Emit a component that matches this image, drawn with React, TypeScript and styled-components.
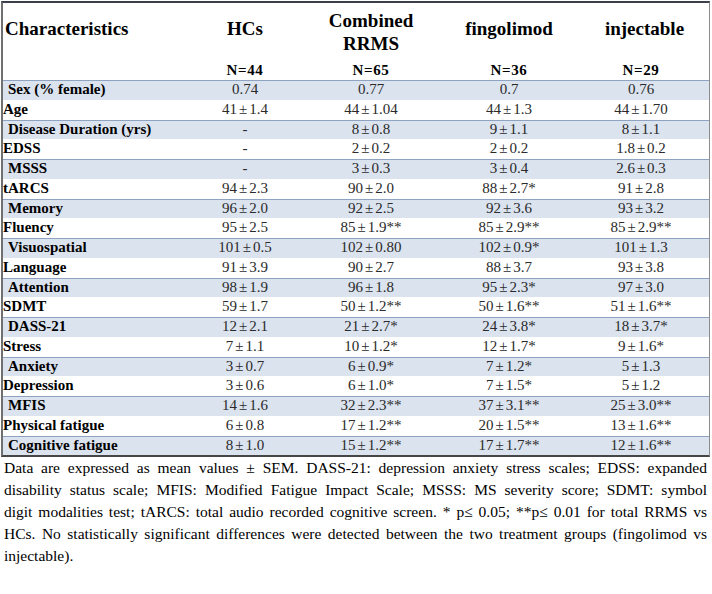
import styled, { createGlobalStyle, css } from "styled-components";

const GlobalStyle = createGlobalStyle`
  html, body {
    margin: 0;
    padding: 0;
    background: #fff;
  }
`;

const serif = css`
  font-family: "Liberation Serif", serif;
`;

const COLS = "181px 122px 130px 146px 1fr";

export const StyledPage = styled.div`
  ${serif};
  width: 712px;
  padding: 1px 0 0 1px;
  box-sizing: border-box;
  color: #000;
`;

export const StyledTable = styled.div`
  ${serif};
  width: 709px;
  box-sizing: border-box;
  border-top: 2px solid #39404c;
  border-left: 2px solid #707070;
  border-right: 1px solid #8c8c8c;
  border-bottom: 2px solid #464646;
`;

export const StyledHeadRow = styled.div`
  display: grid;
  grid-template-columns: ${COLS};
  height: 57px;
  align-items: start;
`;

export const StyledNRow = styled.div`
  display: grid;
  grid-template-columns: ${COLS};
  height: 20px;
  align-items: center;
`;

export const StyledHeadCell = styled.div<{ $left?: boolean; $small?: boolean; $two?: boolean }>`
  ${serif};
  font-size: ${(p) => (p.$small ? "15px" : "19px")};
  line-height: ${(p) => (p.$small ? "18px" : "23px")};
  font-weight: bold;
  color: #000;
  letter-spacing: ${(p) => (p.$small ? "0.6px" : "0")};
  text-align: ${(p) => (p.$left ? "left" : "center")};
  padding-top: ${(p) => (p.$small ? "0" : p.$two ? "6px" : "14px")};
  padding-left: ${(p) => (p.$left ? "2px" : "0")};
  &:last-child {
    padding-right: ${(p) => (p.$small ? "9px" : "2px")};
  }
`;

export const StyledRow = styled.div<{ $shaded: boolean }>`
  display: grid;
  grid-template-columns: ${COLS};
  height: 19.75px;
  box-sizing: border-box;
  align-items: center;
  padding-bottom: 4px;
  background: ${(p) => (p.$shaded ? "#dbe3ef" : "#fff")};
  border-top: 1px solid ${(p) => (p.$shaded ? "#8ea2c1" : "transparent")};
`;

export const StyledLabel = styled.div<{ $indent: boolean }>`
  ${serif};
  font-size: 15px;
  line-height: 17px;
  font-weight: bold;
  color: #000;
  padding-left: ${(p) => (p.$indent ? "5px" : "0")};
  white-space: nowrap;
`;

export const StyledValue = styled.div`
  ${serif};
  font-size: 15px;
  line-height: 17px;
  font-weight: normal;
  text-align: center;
  color: #2a2a2a;
  white-space: nowrap;
  &:last-child {
    padding-right: 9px;
  }
`;

export const StyledPm = styled.span`
  margin: 0 2px;
`;

export const StyledNote = styled.div`
  width: 706px;
  padding-left: 3px;
  box-sizing: border-box;
`;

export const StyledNoteLine = styled.div<{ $last?: boolean }>`
  ${serif};
  font-size: 15.5px;
  line-height: 22px;
  font-weight: normal;
  color: #000;
  white-space: nowrap;
  text-align: justify;
  text-align-last: ${(p) => (p.$last ? "left" : "justify")};
`;

const rows: [string, string[]][] = [
  ["Sex (% female)", ["0.74", "0.77", "0.7", "0.76"]],
  ["Age", ["41|1.4", "44|1.04", "44|1.3", "44|1.70"]],
  ["Disease Duration (yrs)", ["-", "8|0.8", "9|1.1", "8|1.1"]],
  ["EDSS", ["-", "2|0.2", "2|0.2", "1.8|0.2"]],
  ["MSSS", ["-", "3|0.3", "3|0.4", "2.6|0.3"]],
  ["tARCS", ["94|2.3", "90|2.0", "88|2.7*", "91|2.8"]],
  ["Memory", ["96|2.0", "92|2.5", "92|3.6", "93|3.2"]],
  ["Fluency", ["95|2.5", "85|1.9**", "85|2.9**", "85|2.9**"]],
  ["Visuospatial", ["101|0.5", "102|0.80", "102|0.9*", "101|1.3"]],
  ["Language", ["91|3.9", "90|2.7", "88|3.7", "93|3.8"]],
  ["Attention", ["98|1.9", "96|1.8", "95|2.3*", "97|3.0"]],
  ["SDMT", ["59|1.7", "50|1.2**", "50|1.6**", "51|1.6**"]],
  ["DASS-21", ["12|2.1", "21|2.7*", "24|3.8*", "18|3.7*"]],
  ["Stress", ["7|1.1", "10|1.2*", "12|1.7*", "9|1.6*"]],
  ["Anxiety", ["3|0.7", "6|0.9*", "7|1.2*", "5|1.3"]],
  ["Depression", ["3|0.6", "6|1.0*", "7|1.5*", "5|1.2"]],
  ["MFIS", ["14|1.6", "32|2.3**", "37|3.1**", "25|3.0**"]],
  ["Physical fatigue", ["6|0.8", "17|1.2**", "20|1.5**", "13|1.6**"]],
  ["Cognitive fatigue", ["8|1.0", "15|1.2**", "17|1.7**", "12|1.6**"]],
];

const noteLines = [
  "Data are expressed as mean values ± SEM. DASS-21: depression anxiety stress scales; EDSS: expanded",
  "disability status scale; MFIS: Modified Fatigue Impact Scale; MSSS: MS severity score; SDMT: symbol",
  "digit modalities test; tARCS:  total audio recorded cognitive screen. * p≤ 0.05; **p≤ 0.01 for total RRMS vs",
  "HCs. No statistically significant differences were detected between the two treatment groups (fingolimod vs",
  "injectable).",
];

function Value({ v }: { v: string }) {
  const [mean, sem] = v.split("|");
  if (sem === undefined) return <StyledValue>{mean}</StyledValue>;
  return (
    <StyledValue>
      {mean}
      <StyledPm>±</StyledPm>
      {sem}
    </StyledValue>
  );
}

export default function App() {
  return (
    <StyledPage>
      <GlobalStyle />
      <StyledTable>
        <StyledHeadRow>
          <StyledHeadCell $left>Characteristics</StyledHeadCell>
          <StyledHeadCell>HCs</StyledHeadCell>
          <StyledHeadCell $two>
            Combined
            <br />
            RRMS
          </StyledHeadCell>
          <StyledHeadCell>fingolimod</StyledHeadCell>
          <StyledHeadCell>injectable</StyledHeadCell>
        </StyledHeadRow>
        <StyledNRow>
          <StyledHeadCell $left $small />
          <StyledHeadCell $small>N=44</StyledHeadCell>
          <StyledHeadCell $small>N=65</StyledHeadCell>
          <StyledHeadCell $small>N=36</StyledHeadCell>
          <StyledHeadCell $small>N=29</StyledHeadCell>
        </StyledNRow>
        {rows.map(([label, values], i) => (
          <StyledRow key={label} $shaded={i % 2 === 0}>
            <StyledLabel $indent={i % 2 === 0}>{label}</StyledLabel>
            {values.map((v, j) => (
              <Value key={j} v={v} />
            ))}
          </StyledRow>
        ))}
      </StyledTable>
      <StyledNote>
        {noteLines.map((line, i) => (
          <StyledNoteLine key={i} $last={i === noteLines.length - 1}>
            {line}
          </StyledNoteLine>
        ))}
      </StyledNote>
    </StyledPage>
  );
}
